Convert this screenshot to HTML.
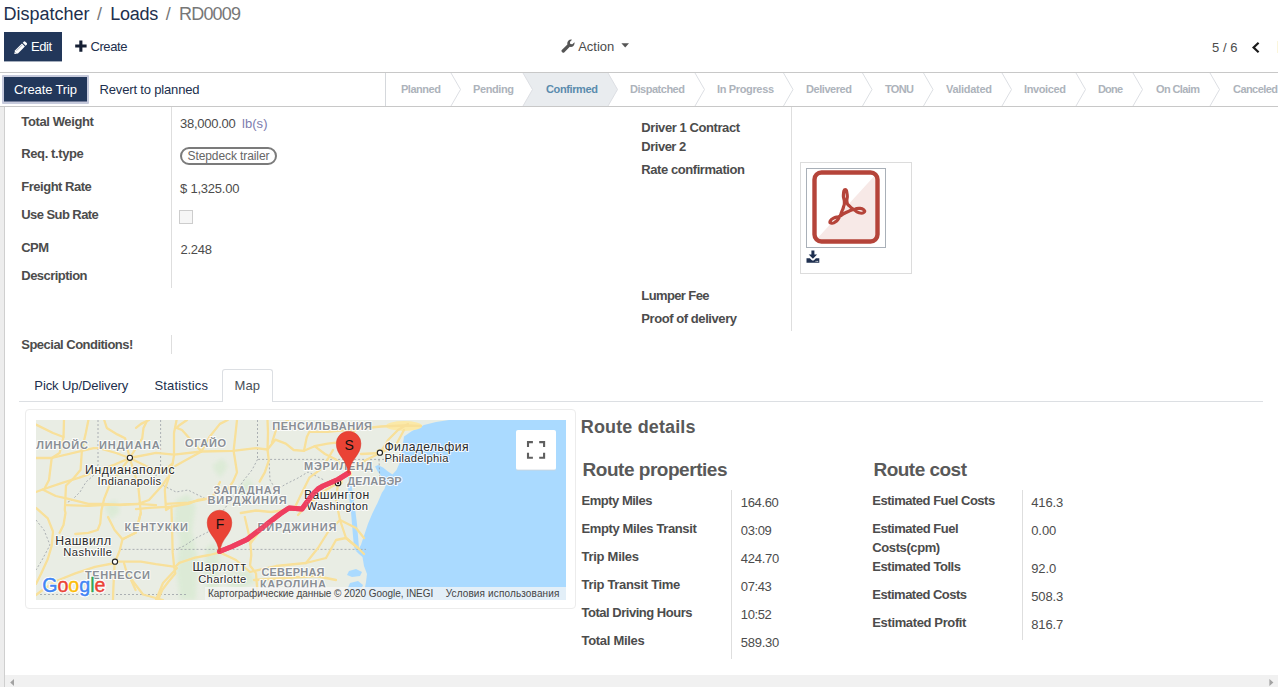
<!DOCTYPE html>
<html><head><meta charset="utf-8"><title>RD0009</title>
<style>
html,body{margin:0;padding:0;}
body{width:1278px;height:687px;overflow:hidden;background:#fff;position:relative;font-family:"Liberation Sans", sans-serif;}
.t{position:absolute;white-space:nowrap;font-family:"Liberation Sans", sans-serif;}
.a{position:absolute;}
</style></head><body>
<!-- page background / sheet -->
<div class="a" style="left:0;top:107px;width:4px;height:580px;background:#ededed;"></div>
<div class="a" style="left:4px;top:107px;width:1px;height:580px;background:#cfcfcf;"></div>
<div class="a" style="left:5px;top:107px;width:1273px;height:568px;background:#fff;"></div>
<!-- control panel bottom line & statusbar -->
<div class="a" style="left:0;top:72px;width:1278px;height:1px;background:#c8c8c8;"></div>
<div class="a" style="left:0;top:73px;width:1278px;height:33px;background:#fff;"></div>
<div class="a" style="left:0;top:106px;width:1278px;height:1px;background:#c8c8c8;"></div>
<!-- bottom scrollbar -->
<div class="a" style="left:5px;top:675px;width:1273px;height:12px;background:#f1f1f1;"></div>
<svg class="a" style="left:0;top:675px" width="1278" height="12" viewBox="0 0 1278 12"><path d="M14 4 L10.2 7.5 L14 11Z" fill="#a3a3a3"/><path d="M1269.4 4 L1273.4 7.5 L1269.4 11Z" fill="#a3a3a3"/></svg>

<!-- Edit button -->
<div class="a" style="left:4px;top:32px;width:58px;height:29px;background:#22375a;border-bottom:1px solid #a4adbc;"></div>
<svg class="a" style="left:13.6px;top:40.6px" width="13.4" height="13.4" viewBox="0 0 14 14"><path d="M0.3 13.7 L1 9.9 L8.3 2.6 L11.4 5.7 L4.1 13 Z" fill="#fff"/><path d="M9.1 1.8 L10.2 0.7 Q11 0 11.8 0.7 L13.3 2.2 Q14 3 13.3 3.8 L12.2 4.9 Z" fill="#fff"/><path d="M2.6 10.2 L8.6 4.2" stroke="#22375a" stroke-width="0.7" opacity=".55" fill="none"/><path d="M0.9 11.3 L2.7 13.1" stroke="#22375a" stroke-width="0.6" opacity=".5" fill="none"/></svg>
<!-- + Create -->
<svg class="a" style="left:75px;top:40px" width="12" height="12" viewBox="0 0 12 12"><path d="M4.3 0.4h3.1v4.2h4.2v3h-4.2v4.2h-3.1v-4.2h-4.1v-3h4.1z" fill="#151f33"/></svg>
<!-- Action wrench + caret -->
<svg class="a" style="left:561px;top:39px" width="14" height="14" viewBox="0 0 14 14"><path d="M13.5 3.2 Q13.9 5.4 12.4 6.9 Q10.9 8.3 8.8 7.8 L3.2 13.4 Q2.4 14.1 1.5 13.4 L0.8 12.7 Q0 11.8 0.8 11 L6.4 5.4 Q5.9 3.3 7.3 1.8 Q8.8 0.3 11 0.7 L8.9 2.9 L9.3 4.9 L11.3 5.3 Z" fill="#555"/></svg>
<svg class="a" style="left:621px;top:43px" width="9" height="5" viewBox="0 0 9 5"><path d="M0.4 0.3h7.6l-3.8 4.2z" fill="#555"/></svg>
<!-- pager chevron -->
<svg class="a" style="left:1251px;top:41px" width="10" height="13" viewBox="0 0 10 13"><path d="M7.6 1.8 L2.6 6.5 L7.6 11.2" stroke="#1a1a1a" stroke-width="2.2" fill="none" stroke-linecap="butt" stroke-linejoin="miter"/></svg>
<div class="a" style="left:1277px;top:41px;width:1px;height:12px;background:#fbf6dc;"></div>

<!-- Create Trip button -->
<div class="a" style="left:2px;top:75px;width:87px;height:29px;background:#c6cadc;border-radius:1px;"></div><div class="a" style="left:4px;top:77px;width:83px;height:24px;background:#22375a;border-bottom:1px solid #747e9b;"></div>

<!-- statusbar arrows -->
<svg class="a" style="left:0;top:73px" width="1278" height="33" viewBox="0 0 1278 33">
<path d="M385.5 0V33" stroke="#d5d8dc" stroke-width="1" fill="none"/>
<path d="M523 0 L532.5 16.5 L523 33 L608 33 L617.5 16.5 L608 0 Z" fill="#e9ecef"/>
<g stroke="#dcdfe3" stroke-width="1" fill="none">
<path d="M451 0 L460.5 16.5 L451 33"/>
<path d="M523 0 L532.5 16.5 L523 33"/>
<path d="M608 0 L617.5 16.5 L608 33"/>
<path d="M695 0 L704.5 16.5 L695 33"/>
<path d="M783.5 0 L793 16.5 L783.5 33"/>
<path d="M862.5 0 L872 16.5 L862.5 33"/>
<path d="M923.5 0 L933 16.5 L923.5 33"/>
<path d="M1002 0 L1011.5 16.5 L1002 33"/>
<path d="M1076 0 L1085.5 16.5 L1076 33"/>
<path d="M1133 0 L1142.5 16.5 L1133 33"/>
<path d="M1210 0 L1219.5 16.5 L1210 33"/>
</g></svg>

<!-- field separators -->
<div class="a" style="left:171px;top:107px;width:1px;height:181px;background:#dedede;"></div>
<div class="a" style="left:171px;top:335px;width:1px;height:19px;background:#dedede;"></div>
<div class="a" style="left:791px;top:107px;width:1px;height:224px;background:#dedede;"></div>
<div class="a" style="left:731px;top:490px;width:1px;height:169px;background:#dedede;"></div>
<div class="a" style="left:1022px;top:490px;width:1px;height:150px;background:#dedede;"></div>

<!-- tag pill -->
<div class="a" style="left:180px;top:147px;width:97px;height:18px;border:2px solid #7b7b7b;border-radius:10px;box-sizing:border-box;"></div>
<!-- checkbox -->
<div class="a" style="left:179px;top:210px;width:14px;height:14px;border:1px solid #cdcdcd;background:#f6f6f6;box-sizing:border-box;"></div>

<!-- rate confirmation image -->
<div class="a" style="left:800px;top:162px;width:110px;height:110px;border:1px solid #dcdcdc;"></div>
<div class="a" style="left:806px;top:168px;width:78px;height:78px;border:1px solid #a9b0b8;"></div>
<svg class="a" style="left:807px;top:169px" width="78" height="78" viewBox="0 0 78 78">
<defs><clipPath id="rc"><rect x="7.5" y="3.5" width="63" height="69" rx="7" ry="7"/></clipPath></defs>
<rect x="7.5" y="3.5" width="63" height="69" rx="7" ry="7" fill="#fff"/>
<path d="M70.5 3.5 L70.5 72.5 L7.5 72.5 Z" fill="#f7e9e7" clip-path="url(#rc)"/>
<rect x="7.5" y="3.5" width="63" height="69" rx="7" ry="7" fill="none" stroke="#b5443a" stroke-width="4.4"/>
<g fill="none" stroke="#b5443a" stroke-width="3.2" stroke-linecap="round" stroke-linejoin="round">
<path d="M34.8 42.5 C33.5 45.8 34.5 44.7 32.5 48.0 C30.5 51.3 31.5 50.4 28.9 52.5 C26.3 54.6 26.5 54.4 24.6 54.2 C22.7 54.0 22.5 53.8 23.3 52.0 C24.1 50.2 24.1 50.4 27.1 48.9 C30.1 47.4 28.7 49.0 32.3 47.4 C35.9 45.8 34.1 46.0 38.0 44.0 C41.9 42.0 40.7 42.6 44.0 41.3 C47.3 40.0 45.2 40.9 48.0 40.2 C50.8 39.5 49.4 39.2 52.3 39.3 C55.2 39.4 55.1 39.2 56.6 40.6 C58.1 42.0 58.2 42.4 56.7 43.5 C55.2 44.6 55.1 44.6 52.0 43.8 C48.9 43.0 50.7 43.3 47.5 41.0 C44.3 38.7 45.0 39.7 42.5 37.0 C40.0 34.3 40.8 36.7 40.0 33.0 C39.2 29.3 40.8 30.1 40.2 26.0 C39.6 21.9 39.6 20.6 38.3 20.6 C37.0 20.6 36.7 21.9 36.4 26.0 C36.1 30.1 37.4 29.0 37.4 33.0 C37.4 37.0 37.4 34.8 36.5 38.0 C35.6 41.2 36.1 39.2 34.8 42.5 Z"/>
</g></svg>
<!-- download icon -->
<svg class="a" style="left:806px;top:250px" width="14" height="14" viewBox="0 0 14 14"><path d="M5.4 0.6h3v3.9h2.7l-4.2 4.2l-4.2-4.2h2.7z" fill="#1f3050"/><path d="M0.5 8.3h3.4l1.7 1.6q1.3 1 2.6 0l1.7-1.6h3.4v4.4h-12.8z" fill="#1f3050"/><rect x="9.6" y="10.9" width="1" height="0.9" fill="#fff"/><rect x="11.2" y="10.9" width="1" height="0.9" fill="#fff"/></svg>

<!-- tabs -->
<div class="a" style="left:19px;top:401px;width:1244px;height:1px;background:#dcdfe3;"></div>
<div class="a" style="left:222px;top:369px;width:51px;height:33px;border:1px solid #dcdfe3;border-bottom:none;border-radius:3px 3px 0 0;background:#fff;box-sizing:border-box;"></div>

<!-- map card -->
<div class="a" style="left:25px;top:409px;width:551px;height:200px;border:1px solid #ececec;border-radius:4px;box-sizing:border-box;background:#fff;"></div>

<svg class="a" style="left:36px;top:420px" width="530" height="180" viewBox="0 0 530 180" font-family="'Liberation Sans', sans-serif">
<defs><filter id="gb" x="-20%%" y="-20%%" width="140%%" height="140%%"><feGaussianBlur stdDeviation="2"/></filter></defs>
<rect width="530" height="180" fill="#e9ede4"/>
<path d="M413.0 0.0 L400.0 2.0 L388.0 5.0 L376.0 11.0 L368.0 16.5 L366.0 30.0 L364.0 42.0 L360.5 50.0 L356.5 54.5 L352.0 51.5 L347.0 47.5 L342.0 45.0 L339.0 46.5 L342.0 52.0 L347.0 58.0 L350.0 64.0 L348.5 69.0 L346.0 72.5 L341.5 83.0 L336.3 93.4 L332.0 103.8 L328.5 114.3 L325.0 124.8 L322.5 129.5 L320.0 131.0 L323.0 134.0 L326.5 137.0 L328.0 146.0 L331.0 154.0 L330.0 162.0 L328.5 170.0 L327.0 180.0 L530.0 180.0 L530.0 0.0 Z" fill="#aadaff"/>
<path d="M312.0 56.0 L314.0 56.0 L316.0 68.0 L318.0 80.0 L319.5 92.0 L321.0 104.0 L322.0 116.0 L323.0 128.0 L320.0 131.0 L318.0 127.0 L317.0 116.0 L316.0 104.0 L315.0 92.0 L313.5 80.0 L312.0 68.0 Z" fill="#aadaff"/>
<path d="M313.0 151.0 L320.0 149.0 L326.0 152.0 L324.0 156.0 L316.0 157.0 L311.0 155.0 Z" fill="#aadaff"/>
<path d="M314.0 163.0 L322.0 161.0 L327.0 165.0 L324.0 172.0 L316.0 174.0 L311.0 170.0 Z" fill="#aadaff"/>
<path d="M140.0 80.0 L152.0 74.0 L160.0 86.0 L156.0 110.0 L162.0 140.0 L160.0 180.0 L144.0 180.0 L140.0 150.0 L144.0 120.0 L138.0 100.0 Z" fill="#d8ead2" opacity="0.75" filter="url(#gb)"/>
<path d="M170.0 128.0 L178.0 122.0 L184.0 132.0 L182.0 160.0 L186.0 180.0 L172.0 180.0 L168.0 155.0 Z" fill="#d8ead2" opacity="0.75" filter="url(#gb)"/>
<path d="M68.0 85.0 L80.0 80.0 L84.0 92.0 L74.0 100.0 Z" fill="#d8ead2" opacity="0.75" filter="url(#gb)"/>
<path d="M200.0 70.0 L212.0 58.0 L218.0 66.0 L208.0 80.0 Z" fill="#d8ead2" opacity="0.75" filter="url(#gb)"/>
<path d="M190.0 155.0 L214.0 150.0 L220.0 162.0 L204.0 170.0 L192.0 166.0 Z" fill="#d8ead2" opacity="0.75" filter="url(#gb)"/>
<path d="M176.0 46.0 L186.0 38.0 L192.0 46.0 L184.0 58.0 Z" fill="#d8ead2" opacity="0.75" filter="url(#gb)"/>
<ellipse cx="368.0" cy="6.0" rx="18" ry="5" fill="#fbe9a8"/>
<ellipse cx="302.0" cy="62.0" rx="5" ry="4" fill="#fbe9a8"/>
<ellipse cx="344.0" cy="32.0" rx="4" ry="3" fill="#fbe9a8"/>
<ellipse cx="313.0" cy="54.0" rx="3" ry="3" fill="#fbe9a8"/>
<g fill="none" stroke="#9aa0a6" stroke-width="0.8" stroke-dasharray="2 2">
<path d="M62.0 0.0 L62.0 45.0 L58.0 55.0 L50.0 62.0 L44.0 72.0 L36.0 80.0 L28.0 84.0"/>
<path d="M124.6 0.0 L124.6 50.0 L118.0 58.0 L128.0 66.0 L140.0 72.0 L152.0 70.0 L164.0 76.0 L176.0 82.0 L186.0 80.0"/>
<path d="M221.5 0.0 L221.5 39.4 L360.0 39.4"/>
<path d="M221.5 39.4 L216.0 50.0 L208.0 60.0 L200.0 72.0 L192.0 84.0 L186.0 92.0 L180.0 104.0 L172.0 112.0 L160.0 118.0 L148.0 126.0 L140.0 129.4"/>
<path d="M84.5 129.4 L330.0 129.4"/>
<path d="M0.0 174.5 L150.0 174.5"/>
<path d="M233.0 39.4 L234.0 60.0 L240.0 70.0 L250.0 64.0 L262.0 58.0 L272.0 52.0 L280.0 56.0 L288.0 60.0"/>
<path d="M343.0 39.4 L344.0 64.0 L352.0 64.0"/>
<path d="M0.0 100.0 L8.0 110.0 L14.0 125.0 L6.0 140.0 L0.0 150.0"/>
</g>
<defs><filter id="rb" x="-5%%" y="-5%%" width="110%%" height="110%%"><feGaussianBlur stdDeviation="0.55"/></filter></defs>
<g fill="none" stroke="#f8e09a" stroke-width="2.3" stroke-linecap="round" stroke-linejoin="round" filter="url(#rb)">
<path d="M0.0 4.6 L17.0 13.0 L27.5 17.0"/>
<path d="M28.0 0.0 L27.5 17.0 L23.6 33.0 L15.7 38.0 L13.0 60.0 L8.0 69.5"/>
<path d="M52.4 0.0 L49.8 13.0 L45.9 30.0 L44.6 49.8 L38.0 57.7 L30.0 65.5 L28.8 90.0 L29.5 93.0 L27.5 105.0 L23.6 112.8"/>
<path d="M0.0 38.0 L15.7 38.0 L45.9 30.8 L57.7 28.2 L63.0 28.2 L80.0 33.0 L93.7 38.0 L120.0 32.8 L138.0 34.7 L165.5 31.5 L197.0 30.8 L220.0 28.2 L231.5 29.5"/>
<path d="M93.7 38.0 L78.6 44.6 L43.3 57.7 L26.2 62.9 L6.6 69.5 L0.0 72.0"/>
<path d="M6.6 69.5 L19.7 76.0 L31.5 78.6 L52.4 83.9 L68.2 83.9 L83.9 85.2 L102.2 83.9 L113.0 80.0 L126.2 65.5 L131.5 57.7"/>
<path d="M93.7 38.0 L73.4 65.5 L68.2 78.6 L65.5 90.0 L64.2 103.6 L61.6 110.0 L52.4 112.8 L39.3 114.0"/>
<path d="M93.7 38.0 L102.2 65.5 L103.5 78.6 L104.8 93.0 L99.6 112.8 L86.5 119.3"/>
<path d="M111.4 0.0 L107.5 7.9 L106.2 18.3 L93.7 38.0"/>
<path d="M68.2 0.0 L70.8 7.9 L81.3 14.4 L89.1 18.3 L93.7 38.0"/>
<path d="M93.7 38.0 L110.0 46.0 L126.0 52.0 L136.7 43.3"/>
<path d="M140.6 0.0 L138.0 13.0 L138.0 35.4 L136.7 43.3 L132.8 57.7 L128.8 69.5 L130.0 90.0 L135.4 86.6"/>
<path d="M165.5 31.5 L150.0 40.0 L139.3 45.9"/>
<path d="M165.5 31.5 L173.4 17.0 L183.9 3.9 L191.7 0.0"/>
<path d="M140.6 7.9 L143.3 5.2 L151.0 0.0"/>
<path d="M165.5 31.5 L155.0 20.0 L146.0 10.0 L140.6 7.9"/>
<path d="M201.0 0.0 L199.6 13.0 L197.6 30.8 L199.6 43.3 L201.0 52.4 L197.0 61.6 L190.0 72.0"/>
<path d="M130.0 83.9 L152.4 82.6 L172.0 78.6"/>
<path d="M100.0 7.9 L105.0 3.9 L113.0 0.0"/>
<path d="M231.5 29.5 L239.3 19.7 L249.8 23.6 L257.7 30.0 L268.0 30.8 L278.6 26.2 L291.7 23.6 L302.0 22.3"/>
<path d="M231.5 0.0 L232.0 13.0 L231.5 29.5 L232.8 40.6 L228.8 52.4 L223.6 61.6"/>
<path d="M268.0 30.8 L270.8 17.0 L273.4 11.8 L291.7 11.8 L320.0 9.2 L345.0 6.5 L368.0 5.5 L385.0 6.0"/>
<path d="M278.6 26.2 L289.0 34.0 L299.6 39.3 L311.4 51.0"/>
<path d="M257.7 90.0 L265.5 73.4 L273.4 57.7 L283.9 49.8 L291.7 39.3 L297.0 30.0"/>
<path d="M325.0 34.0 L344.0 33.0 L360.0 25.0 L368.0 10.0"/>
<path d="M302.0 63.0 L312.4 52.0 L330.0 40.0 L344.0 33.0"/>
<path d="M302.0 63.0 L300.0 80.0 L304.0 100.0 L310.0 118.0 L322.0 128.0"/>
<path d="M302.0 63.0 L290.0 70.0 L270.0 86.0 L262.0 95.0"/>
<path d="M304.0 100.0 L320.0 108.0 L328.0 118.0"/>
<path d="M236.0 22.5 L240.0 10.0 L252.0 0.0"/>
<path d="M302.0 22.3 L310.0 20.0 L320.0 9.2"/>
<path d="M344.0 33.0 L352.0 20.0 L362.0 10.0 L372.0 4.0"/>
<path d="M0.0 87.9 L11.8 98.3 L17.0 111.5 L15.7 125.9 L11.8 139.0 L5.2 153.4 L0.0 163.9"/>
<path d="M30.0 85.2 L52.4 85.9 L65.5 85.2 L102.2 83.9 L120.0 85.2"/>
<path d="M72.0 97.0 L78.6 110.0 L86.5 119.3 L83.9 129.8 L79.3 141.6"/>
<path d="M86.5 119.3 L99.6 112.8 L104.8 93.0"/>
<path d="M79.3 141.6 L104.8 141.6 L120.0 144.2 L139.3 146.8 L143.3 142.9 L159.0 137.7 L173.4 135.0 L183.9 132.4"/>
<path d="M79.3 143.0 L59.0 146.8 L39.3 153.4 L19.7 161.3 L6.6 170.0 L0.0 175.0"/>
<path d="M78.6 143.0 L77.3 170.0 L77.0 180.0"/>
<path d="M99.6 170.0 L94.4 158.6 L90.0 150.0 L88.0 143.0"/>
<path d="M141.0 148.0 L127.0 163.0 L120.0 180.0"/>
<path d="M96.0 160.0 L107.0 174.5 L127.0 180.0"/>
<path d="M100.0 89.2 L113.0 87.9 L135.4 86.6 L152.4 83.9 L161.6 80.0 L172.0 78.6"/>
<path d="M135.4 86.6 L136.0 106.2 L136.7 132.4 L138.0 145.5 L139.3 153.4 L132.8 161.3 L126.2 170.0 L122.0 180.0"/>
<path d="M208.8 97.0 L214.0 119.3 L215.3 135.0 L214.0 145.5 L220.0 153.4 L222.0 180.0"/>
<path d="M204.8 93.0 L220.0 90.5 L235.0 92.0 L250.4 90.0"/>
<path d="M184.0 62.0 L176.0 78.0 L172.0 78.6"/>
<path d="M214.0 124.0 L226.0 108.0 L250.4 90.0"/>
<path d="M183.9 132.4 L200.0 140.0 L214.0 152.0 L240.0 146.0 L270.0 143.0 L290.0 138.0"/>
<path d="M290.0 138.0 L300.0 120.0 L310.0 118.0"/>
<path d="M270.0 143.0 L282.0 128.0 L292.0 112.0 L304.0 100.0"/>
<path d="M218.0 160.0 L250.0 158.0 L280.0 156.0 L300.0 160.0"/>
<path d="M310.0 118.0 L322.0 128.0 L328.0 134.0"/>
</g>
<path d="M183.5 131.5 L196.0 126.5 L211.0 119.5 L226.0 108.0 L244.0 94.0 L253.0 88.0 L266.0 89.0 L271.0 82.0 L276.5 74.5 L282.0 69.0 L287.0 66.0 L302.0 59.5 L312.5 53.0" fill="none" stroke="#ee3d5e" stroke-opacity="0.95" stroke-width="5" stroke-linejoin="round" stroke-linecap="round"/>
<text x="-17.0" y="29.0" textLength="69.0" lengthAdjust="spacing" font-size="11" font-weight="700" fill="#8a8f96" style="paint-order:stroke;stroke:#fff;stroke-opacity:.85;stroke-width:2px;stroke-linejoin:round;">ИЛЛИНОЙС</text>
<text x="63.1" y="29.0" textLength="60.6" lengthAdjust="spacing" font-size="11" font-weight="700" fill="#8a8f96" style="paint-order:stroke;stroke:#fff;stroke-opacity:.85;stroke-width:2px;stroke-linejoin:round;">ИНДИАНА</text>
<text x="149.0" y="27.0" textLength="41.0" lengthAdjust="spacing" font-size="11" font-weight="700" fill="#8a8f96" style="paint-order:stroke;stroke:#fff;stroke-opacity:.85;stroke-width:2px;stroke-linejoin:round;">ОГАЙО</text>
<text x="236.2" y="10.4" textLength="99.8" lengthAdjust="spacing" font-size="11" font-weight="700" fill="#8a8f96" style="paint-order:stroke;stroke:#fff;stroke-opacity:.85;stroke-width:2px;stroke-linejoin:round;">ПЕНСИЛЬВАНИЯ</text>
<text x="177.4" y="74.0" textLength="66.9" lengthAdjust="spacing" font-size="11" font-weight="700" fill="#8a8f96" style="paint-order:stroke;stroke:#fff;stroke-opacity:.85;stroke-width:2px;stroke-linejoin:round;">ЗАПАДНАЯ</text>
<text x="171.5" y="84.4" textLength="79.1" lengthAdjust="spacing" font-size="11" font-weight="700" fill="#8a8f96" style="paint-order:stroke;stroke:#fff;stroke-opacity:.85;stroke-width:2px;stroke-linejoin:round;">ВИРДЖИНИЯ</text>
<text x="88.5" y="111.0" textLength="63.5" lengthAdjust="spacing" font-size="11" font-weight="700" fill="#8a8f96" style="paint-order:stroke;stroke:#fff;stroke-opacity:.85;stroke-width:2px;stroke-linejoin:round;">КЕНТУККИ</text>
<text x="221.5" y="111.0" textLength="79.0" lengthAdjust="spacing" font-size="11" font-weight="700" fill="#8a8f96" style="paint-order:stroke;stroke:#fff;stroke-opacity:.85;stroke-width:2px;stroke-linejoin:round;">ВИРДЖИНИЯ</text>
<text x="49.0" y="158.7" textLength="64.9" lengthAdjust="spacing" font-size="11" font-weight="700" fill="#8a8f96" style="paint-order:stroke;stroke:#fff;stroke-opacity:.85;stroke-width:2px;stroke-linejoin:round;">ТЕННЕССИ</text>
<text x="225.4" y="156.3" textLength="63.1" lengthAdjust="spacing" font-size="11" font-weight="700" fill="#8a8f96" style="paint-order:stroke;stroke:#fff;stroke-opacity:.85;stroke-width:2px;stroke-linejoin:round;">СЕВЕРНАЯ</text>
<text x="224.0" y="168.0" textLength="65.9" lengthAdjust="spacing" font-size="11" font-weight="700" fill="#8a8f96" style="paint-order:stroke;stroke:#fff;stroke-opacity:.85;stroke-width:2px;stroke-linejoin:round;">КАРОЛИНА</text>
<text x="268.0" y="49.8" textLength="68.6" lengthAdjust="spacing" font-size="11" font-weight="700" fill="#8a8f96" style="paint-order:stroke;stroke:#fff;stroke-opacity:.85;stroke-width:2px;stroke-linejoin:round;">МЭРИЛЕНД</text>
<text x="311.2" y="64.7" textLength="54.5" lengthAdjust="spacing" font-size="11" font-weight="700" fill="#8a8f96" style="paint-order:stroke;stroke:#fff;stroke-opacity:.85;stroke-width:2px;stroke-linejoin:round;">ДЕЛАВЭР</text>
<text x="49.1" y="53.7" textLength="89.5" lengthAdjust="spacing" font-size="12.2" font-weight="400" fill="#2b2b2b" style="paint-order:stroke;stroke:#fff;stroke-opacity:.85;stroke-width:2px;stroke-linejoin:round;">Индианаполис</text>
<text x="61.6" y="65.0" textLength="63.6" lengthAdjust="spacing" font-size="11.2" font-weight="400" fill="#2b2b2b" style="paint-order:stroke;stroke:#fff;stroke-opacity:.85;stroke-width:2px;stroke-linejoin:round;">Indianapolis</text>
<text x="19.2" y="124.7" textLength="55.8" lengthAdjust="spacing" font-size="12.2" font-weight="400" fill="#2b2b2b" style="paint-order:stroke;stroke:#fff;stroke-opacity:.85;stroke-width:2px;stroke-linejoin:round;">Нашвилл</text>
<text x="27.3" y="135.7" textLength="48.7" lengthAdjust="spacing" font-size="11.2" font-weight="400" fill="#2b2b2b" style="paint-order:stroke;stroke:#fff;stroke-opacity:.85;stroke-width:2px;stroke-linejoin:round;">Nashville</text>
<text x="156.5" y="151.3" textLength="53.5" lengthAdjust="spacing" font-size="12.2" font-weight="400" fill="#2b2b2b" style="paint-order:stroke;stroke:#fff;stroke-opacity:.85;stroke-width:2px;stroke-linejoin:round;">Шарлотт</text>
<text x="162.2" y="162.6" textLength="48.1" lengthAdjust="spacing" font-size="11.2" font-weight="400" fill="#2b2b2b" style="paint-order:stroke;stroke:#fff;stroke-opacity:.85;stroke-width:2px;stroke-linejoin:round;">Charlotte</text>
<text x="268.0" y="79.1" textLength="65.3" lengthAdjust="spacing" font-size="12.2" font-weight="400" fill="#2b2b2b" style="paint-order:stroke;stroke:#fff;stroke-opacity:.85;stroke-width:2px;stroke-linejoin:round;">Вашингтон</text>
<text x="270.5" y="90.4" textLength="61.6" lengthAdjust="spacing" font-size="11.2" font-weight="400" fill="#2b2b2b" style="paint-order:stroke;stroke:#fff;stroke-opacity:.85;stroke-width:2px;stroke-linejoin:round;">Washington</text>
<text x="348.4" y="30.7" textLength="84.1" lengthAdjust="spacing" font-size="12.2" font-weight="400" fill="#2b2b2b" style="paint-order:stroke;stroke:#fff;stroke-opacity:.85;stroke-width:2px;stroke-linejoin:round;">Филадельфия</text>
<text x="348.4" y="41.9" textLength="64.1" lengthAdjust="spacing" font-size="11.2" font-weight="400" fill="#2b2b2b" style="paint-order:stroke;stroke:#fff;stroke-opacity:.85;stroke-width:2px;stroke-linejoin:round;">Philadelphia</text>
<circle cx="93.9" cy="37.8" r="2.6" fill="#fff" stroke="#222" stroke-width="1.1"/>
<circle cx="79.0" cy="141.7" r="2.6" fill="#fff" stroke="#222" stroke-width="1.1"/>
<circle cx="343.9" cy="32.7" r="2.6" fill="#fff" stroke="#222" stroke-width="1.1"/>
<circle cx="302.0" cy="63.0" r="2.8" fill="#fff" stroke="#222" stroke-width="1.1"/><circle cx="302.0" cy="63.0" r="1.2" fill="#222"/>
<path d="M183.5 131.5 L196.0 126.5 L211.0 119.5 L226.0 108.0 L244.0 94.0 L253.0 88.0 L266.0 89.0 L271.0 82.0 L276.5 74.5 L282.0 69.0 L287.0 66.0 L302.0 59.5 L312.5 53.0" fill="none" stroke="#ee3d5e" stroke-opacity="0.9" stroke-width="5" stroke-linejoin="round" stroke-linecap="round"/>
<path d="M182.9 132.0 C182.3 118.0 171.2 115.0 171.2 102.5 A12.3 12.3 0 1 1 195.8 102.5 C195.8 115.0 184.7 118.0 184.1 132.0 Z" fill="#ea4335" stroke="#d6382c" stroke-width="0.5" stroke-linejoin="round"/>
<text x="184.1" y="108.5" text-anchor="middle" font-size="14" fill="#111">F</text>
<path d="M312.0 53.0 C311.4 39.0 300.3 36.0 300.3 23.5 A12.3 12.3 0 1 1 324.9 23.5 C324.9 36.0 313.8 39.0 313.2 53.0 Z" fill="#ea4335" stroke="#d6382c" stroke-width="0.5" stroke-linejoin="round"/>
<text x="313.2" y="29.5" text-anchor="middle" font-size="14" fill="#111">S</text>
<rect x="480" y="10" width="40" height="40" rx="2" fill="#fff"/>
<rect x="480.5" y="49.5" width="39" height="1.2" fill="#c9d3dc" opacity=".7"/>
<g fill="none" stroke="#5f5f5f" stroke-width="2.1"><path d="M492 27 V22.1 H496.9"/><path d="M503.2 22.1 H508.1 V27"/><path d="M508.1 32.8 V37.7 H503.2"/><path d="M496.9 37.7 H492 V32.8"/></g>
<rect x="169" y="167" width="234" height="13" fill="#f5f5f5" opacity=".75"/>
<rect x="403" y="167" width="127" height="13" fill="#f5f5f5" opacity=".75"/>
<text x="172.0" y="177.0" textLength="225.2" lengthAdjust="spacing" font-size="10" font-weight="400" fill="#444" style="">Картографические данные © 2020 Google, INEGI</text>
<text x="409.7" y="177.0" textLength="113.7" lengthAdjust="spacing" font-size="10" font-weight="400" fill="#444" style="">Условия использования</text>
<text x="6.2" y="172.3" font-size="19.6" fill="#fff" stroke="#fff" stroke-width="2.6" stroke-linejoin="round">Google</text>
<text x="6.2" y="172.3" font-size="19.6" stroke-width="0.45"><tspan fill="#4285f4" stroke="#4285f4">G</tspan><tspan fill="#ea4335" stroke="#ea4335">o</tspan><tspan fill="#fbbc05" stroke="#fbbc05">o</tspan><tspan fill="#4285f4" stroke="#4285f4">g</tspan><tspan fill="#34a853" stroke="#34a853">l</tspan><tspan fill="#ea4335" stroke="#ea4335">e</tspan></text>
</svg>
<span class="t" style="left:3.5px;top:4.8px;font-size:18px;line-height:18px;color:#212f4d;letter-spacing:-0.01px;">Dispatcher</span>
<span class="t" style="left:97.0px;top:4.8px;font-size:18px;line-height:18px;color:#777;letter-spacing:0.00px;">/</span>
<span class="t" style="left:110.3px;top:4.8px;font-size:18px;line-height:18px;color:#212f4d;letter-spacing:-0.26px;">Loads</span>
<span class="t" style="left:165.8px;top:4.8px;font-size:18px;line-height:18px;color:#777;letter-spacing:0.00px;">/</span>
<span class="t" style="left:179.0px;top:4.8px;font-size:18px;line-height:18px;color:#777;letter-spacing:-0.81px;">RD0009</span>
<span class="t" style="left:31.0px;top:40.3px;font-size:13px;line-height:13px;color:#fff;letter-spacing:-0.47px;">Edit</span>
<span class="t" style="left:90.5px;top:40.3px;font-size:13px;line-height:13px;color:#212f4d;letter-spacing:-0.43px;">Create</span>
<span class="t" style="left:578.2px;top:40.2px;font-size:13px;line-height:13px;color:#4c4c4c;letter-spacing:-0.01px;">Action</span>
<span class="t" style="left:1212.0px;top:41.0px;font-size:13px;line-height:13px;color:#4c4c4c;letter-spacing:0.03px;">5 / 6</span>
<span class="t" style="left:14.0px;top:83.0px;font-size:13px;line-height:13px;color:#fff;letter-spacing:-0.13px;">Create Trip</span>
<span class="t" style="left:99.5px;top:83.0px;font-size:13px;line-height:13px;color:#212f4d;letter-spacing:-0.16px;">Revert to planned</span>
<span class="t" style="left:401.0px;top:83.5px;font-size:11px;line-height:11px;font-weight:700;color:#adb3bb;letter-spacing:-0.47px;">Planned</span>
<span class="t" style="left:473.0px;top:83.5px;font-size:11px;line-height:11px;font-weight:700;color:#adb3bb;letter-spacing:-0.40px;">Pending</span>
<span class="t" style="left:546.0px;top:83.5px;font-size:11px;line-height:11px;font-weight:700;color:#5a8bad;letter-spacing:-0.38px;">Confirmed</span>
<span class="t" style="left:630.0px;top:83.5px;font-size:11px;line-height:11px;font-weight:700;color:#adb3bb;letter-spacing:-0.48px;">Dispatched</span>
<span class="t" style="left:717.0px;top:83.5px;font-size:11px;line-height:11px;font-weight:700;color:#adb3bb;letter-spacing:-0.35px;">In Progress</span>
<span class="t" style="left:806.0px;top:83.5px;font-size:11px;line-height:11px;font-weight:700;color:#adb3bb;letter-spacing:-0.44px;">Delivered</span>
<span class="t" style="left:885.0px;top:83.5px;font-size:11px;line-height:11px;font-weight:700;color:#adb3bb;letter-spacing:-0.66px;">TONU</span>
<span class="t" style="left:946.0px;top:83.5px;font-size:11px;line-height:11px;font-weight:700;color:#adb3bb;letter-spacing:-0.29px;">Validated</span>
<span class="t" style="left:1024.0px;top:83.5px;font-size:11px;line-height:11px;font-weight:700;color:#adb3bb;letter-spacing:-0.38px;">Invoiced</span>
<span class="t" style="left:1098.0px;top:83.5px;font-size:11px;line-height:11px;font-weight:700;color:#adb3bb;letter-spacing:-0.83px;">Done</span>
<span class="t" style="left:1156.0px;top:83.5px;font-size:11px;line-height:11px;font-weight:700;color:#adb3bb;letter-spacing:-0.61px;">On Claim</span>
<span class="t" style="left:1233.0px;top:83.5px;font-size:11px;line-height:11px;font-weight:700;color:#adb3bb;letter-spacing:-0.56px;">Canceled</span>
<span class="t" style="left:21.3px;top:115.3px;font-size:13px;line-height:13px;font-weight:700;color:#4c4c4c;letter-spacing:-0.38px;">Total Weight</span>
<span class="t" style="left:21.3px;top:147.3px;font-size:13px;line-height:13px;font-weight:700;color:#4c4c4c;letter-spacing:-0.40px;">Req. t.type</span>
<span class="t" style="left:21.3px;top:179.8px;font-size:13px;line-height:13px;font-weight:700;color:#4c4c4c;letter-spacing:-0.49px;">Freight Rate</span>
<span class="t" style="left:21.3px;top:207.8px;font-size:13px;line-height:13px;font-weight:700;color:#4c4c4c;letter-spacing:-0.57px;">Use Sub Rate</span>
<span class="t" style="left:21.3px;top:241.0px;font-size:13px;line-height:13px;font-weight:700;color:#4c4c4c;letter-spacing:-0.60px;">CPM</span>
<span class="t" style="left:21.3px;top:269.0px;font-size:13px;line-height:13px;font-weight:700;color:#4c4c4c;letter-spacing:-0.53px;">Description</span>
<span class="t" style="left:21.3px;top:337.8px;font-size:13px;line-height:13px;font-weight:700;color:#4c4c4c;letter-spacing:-0.52px;">Special Conditions!</span>
<span class="t" style="left:180.0px;top:117.0px;font-size:13px;line-height:13px;color:#4c4c4c;letter-spacing:-0.26px;">38,000.00</span>
<span class="t" style="left:242.0px;top:117.0px;font-size:13px;line-height:13px;color:#7c7bad;letter-spacing:0.05px;">lb(s)</span>
<span class="t" style="left:187.5px;top:149.8px;font-size:12px;line-height:12px;color:#666;letter-spacing:-0.09px;">Stepdeck trailer</span>
<span class="t" style="left:180.0px;top:181.5px;font-size:13px;line-height:13px;color:#4c4c4c;letter-spacing:-0.22px;">$ 1,325.00</span>
<span class="t" style="left:180.5px;top:242.8px;font-size:13px;line-height:13px;color:#4c4c4c;letter-spacing:-0.26px;">2.248</span>
<span class="t" style="left:641.3px;top:121.0px;font-size:13px;line-height:13px;font-weight:700;color:#4c4c4c;letter-spacing:-0.42px;">Driver 1 Contract</span>
<span class="t" style="left:641.3px;top:140.3px;font-size:13px;line-height:13px;font-weight:700;color:#4c4c4c;letter-spacing:-0.49px;">Driver 2</span>
<span class="t" style="left:641.3px;top:162.8px;font-size:13px;line-height:13px;font-weight:700;color:#4c4c4c;letter-spacing:-0.43px;">Rate confirmation</span>
<span class="t" style="left:641.3px;top:289.0px;font-size:13px;line-height:13px;font-weight:700;color:#4c4c4c;letter-spacing:-0.61px;">Lumper Fee</span>
<span class="t" style="left:641.3px;top:312.0px;font-size:13px;line-height:13px;font-weight:700;color:#4c4c4c;letter-spacing:-0.43px;">Proof of delivery</span>
<span class="t" style="left:34.3px;top:378.7px;font-size:13px;line-height:13px;color:#212f4d;letter-spacing:-0.09px;">Pick Up/Delivery</span>
<span class="t" style="left:154.5px;top:378.7px;font-size:13px;line-height:13px;color:#212f4d;letter-spacing:0.16px;">Statistics</span>
<span class="t" style="left:234.5px;top:378.7px;font-size:13px;line-height:13px;color:#495057;letter-spacing:0.10px;">Map</span>
<span class="t" style="left:580.8px;top:417.8px;font-size:18px;line-height:18px;font-weight:700;color:#595959;letter-spacing:0.14px;">Route details</span>
<span class="t" style="left:582.5px;top:460.3px;font-size:19px;line-height:19px;font-weight:700;color:#595959;letter-spacing:-0.47px;">Route properties</span>
<span class="t" style="left:873.5px;top:460.3px;font-size:19px;line-height:19px;font-weight:700;color:#595959;letter-spacing:-0.52px;">Route cost</span>
<span class="t" style="left:581.5px;top:494.0px;font-size:13px;line-height:13px;font-weight:700;color:#4c4c4c;letter-spacing:-0.49px;">Empty Miles</span>
<span class="t" style="left:740.8px;top:496.0px;font-size:13px;line-height:13px;color:#4c4c4c;letter-spacing:-0.35px;">164.60</span>
<span class="t" style="left:581.5px;top:522.0px;font-size:13px;line-height:13px;font-weight:700;color:#4c4c4c;letter-spacing:-0.38px;">Empty Miles Transit</span>
<span class="t" style="left:740.8px;top:524.0px;font-size:13px;line-height:13px;color:#4c4c4c;letter-spacing:-0.39px;">03:09</span>
<span class="t" style="left:581.5px;top:550.0px;font-size:13px;line-height:13px;font-weight:700;color:#4c4c4c;letter-spacing:-0.27px;">Trip Miles</span>
<span class="t" style="left:740.8px;top:552.0px;font-size:13px;line-height:13px;color:#4c4c4c;letter-spacing:-0.27px;">424.70</span>
<span class="t" style="left:581.5px;top:578.0px;font-size:13px;line-height:13px;font-weight:700;color:#4c4c4c;letter-spacing:-0.31px;">Trip Transit Time</span>
<span class="t" style="left:740.8px;top:580.0px;font-size:13px;line-height:13px;color:#4c4c4c;letter-spacing:-0.39px;">07:43</span>
<span class="t" style="left:581.5px;top:606.0px;font-size:13px;line-height:13px;font-weight:700;color:#4c4c4c;letter-spacing:-0.48px;">Total Driving Hours</span>
<span class="t" style="left:740.8px;top:608.0px;font-size:13px;line-height:13px;color:#4c4c4c;letter-spacing:-0.39px;">10:52</span>
<span class="t" style="left:581.5px;top:634.0px;font-size:13px;line-height:13px;font-weight:700;color:#4c4c4c;letter-spacing:-0.30px;">Total Miles</span>
<span class="t" style="left:740.8px;top:636.0px;font-size:13px;line-height:13px;color:#4c4c4c;letter-spacing:-0.27px;">589.30</span>
<span class="t" style="left:872.3px;top:494.0px;font-size:13px;line-height:13px;font-weight:700;color:#4c4c4c;letter-spacing:-0.49px;">Estimated Fuel Costs</span>
<span class="t" style="left:1031.2px;top:496.0px;font-size:13px;line-height:13px;color:#4c4c4c;letter-spacing:-0.11px;">416.3</span>
<span class="t" style="left:872.3px;top:522.0px;font-size:13px;line-height:13px;font-weight:700;color:#4c4c4c;letter-spacing:-0.48px;">Estimated Fuel</span>
<span class="t" style="left:1031.2px;top:524.0px;font-size:13px;line-height:13px;color:#4c4c4c;letter-spacing:-0.07px;">0.00</span>
<span class="t" style="left:872.3px;top:541.0px;font-size:13px;line-height:13px;font-weight:700;color:#4c4c4c;letter-spacing:-0.40px;">Costs(cpm)</span>
<span class="t" style="left:872.3px;top:560.3px;font-size:13px;line-height:13px;font-weight:700;color:#4c4c4c;letter-spacing:-0.46px;">Estimated Tolls</span>
<span class="t" style="left:1031.2px;top:562.2px;font-size:13px;line-height:13px;color:#4c4c4c;letter-spacing:-0.07px;">92.0</span>
<span class="t" style="left:872.3px;top:588.0px;font-size:13px;line-height:13px;font-weight:700;color:#4c4c4c;letter-spacing:-0.51px;">Estimated Costs</span>
<span class="t" style="left:1031.2px;top:590.0px;font-size:13px;line-height:13px;color:#4c4c4c;letter-spacing:-0.11px;">508.3</span>
<span class="t" style="left:872.3px;top:616.3px;font-size:13px;line-height:13px;font-weight:700;color:#4c4c4c;letter-spacing:-0.37px;">Estimated Profit</span>
<span class="t" style="left:1031.2px;top:618.4px;font-size:13px;line-height:13px;color:#4c4c4c;letter-spacing:-0.11px;">816.7</span>
</body></html>
